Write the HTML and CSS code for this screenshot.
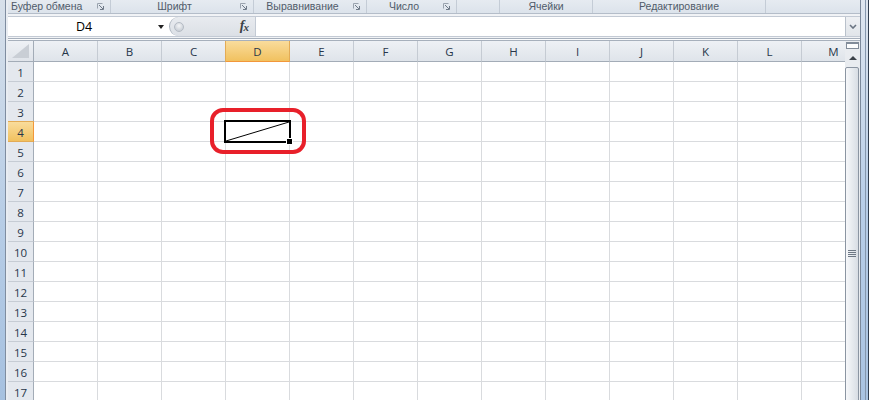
FILE: index.html
```html
<!DOCTYPE html>
<html lang="ru">
<head>
<meta charset="utf-8">
<title>Excel</title>
<link rel="stylesheet" href="styles.css">
</head>
<body>
<div class="window">
  <div class="frame-left"></div>
  <div class="main">
    <div class="ribbon">
      <div class="grp g1"><span class="lbl left">Буфер обмена</span><svg class="dl" viewBox="0 0 7 7" width="7" height="7"><path d="M0.5 5.5V0.5H5.5" fill="none" stroke="#9aa3ae"/><path d="M2 2L6 6M6.5 3V6.5H3" fill="none" stroke="#6f7a88"/></svg></div>
      <div class="grp g2"><span class="lbl">Шрифт</span><svg class="dl" viewBox="0 0 7 7" width="7" height="7"><path d="M0.5 5.5V0.5H5.5" fill="none" stroke="#9aa3ae"/><path d="M2 2L6 6M6.5 3V6.5H3" fill="none" stroke="#6f7a88"/></svg></div>
      <div class="grp g3"><span class="lbl">Выравнивание</span><svg class="dl" viewBox="0 0 7 7" width="7" height="7"><path d="M0.5 5.5V0.5H5.5" fill="none" stroke="#9aa3ae"/><path d="M2 2L6 6M6.5 3V6.5H3" fill="none" stroke="#6f7a88"/></svg></div>
      <div class="grp g4"><span class="lbl">Число</span><svg class="dl" viewBox="0 0 7 7" width="7" height="7"><path d="M0.5 5.5V0.5H5.5" fill="none" stroke="#9aa3ae"/><path d="M2 2L6 6M6.5 3V6.5H3" fill="none" stroke="#6f7a88"/></svg></div>
      <div class="grp g5"></div>
      <div class="grp g6"><span class="lbl">Ячейки</span></div>
      <div class="grp g7"><span class="lbl">Редактирование</span></div>
      <div class="grp g8"></div>
    </div>

    <div class="formula-area">
      <div class="fbar">
        <div class="namebox"><span class="name">D4</span><span class="nb-arrow"></span></div>
        <div class="fx-area"><span class="knob"></span><i class="fx">f<span>x</span></i></div>
        <div class="finput"></div>
        <div class="fexpand"><svg viewBox="0 0 8 5" width="8" height="5"><path d="M1 1L4 4L7 1" fill="none" stroke="#6a7482" stroke-width="1.6"/></svg></div>
      </div>
      <div class="fsep"></div>
    </div>

    <div class="sheet">
      <div class="grid-wrap">
        <div class="grid">
          <div class="corner"><svg viewBox="0 0 17 14" width="17" height="14"><path d="M17 0V14H0Z" fill="#c9ced5"/></svg></div>
          <div class="ch">A</div><div class="ch">B</div><div class="ch">C</div><div class="ch sel">D</div><div class="ch">E</div><div class="ch">F</div><div class="ch">G</div><div class="ch">H</div><div class="ch">I</div><div class="ch">J</div><div class="ch">K</div><div class="ch">L</div><div class="ch">M</div>

          <div class="rh">1</div><div class="c"></div><div class="c"></div><div class="c"></div><div class="c"></div><div class="c"></div><div class="c"></div><div class="c"></div><div class="c"></div><div class="c"></div><div class="c"></div><div class="c"></div><div class="c"></div><div class="c"></div>
          <div class="rh">2</div><div class="c"></div><div class="c"></div><div class="c"></div><div class="c"></div><div class="c"></div><div class="c"></div><div class="c"></div><div class="c"></div><div class="c"></div><div class="c"></div><div class="c"></div><div class="c"></div><div class="c"></div>
          <div class="rh">3</div><div class="c"></div><div class="c"></div><div class="c"></div><div class="c"></div><div class="c"></div><div class="c"></div><div class="c"></div><div class="c"></div><div class="c"></div><div class="c"></div><div class="c"></div><div class="c"></div><div class="c"></div>
          <div class="rh sel">4</div><div class="c"></div><div class="c"></div><div class="c"></div><div class="c"></div><div class="c"></div><div class="c"></div><div class="c"></div><div class="c"></div><div class="c"></div><div class="c"></div><div class="c"></div><div class="c"></div><div class="c"></div>
          <div class="rh">5</div><div class="c"></div><div class="c"></div><div class="c"></div><div class="c"></div><div class="c"></div><div class="c"></div><div class="c"></div><div class="c"></div><div class="c"></div><div class="c"></div><div class="c"></div><div class="c"></div><div class="c"></div>
          <div class="rh">6</div><div class="c"></div><div class="c"></div><div class="c"></div><div class="c"></div><div class="c"></div><div class="c"></div><div class="c"></div><div class="c"></div><div class="c"></div><div class="c"></div><div class="c"></div><div class="c"></div><div class="c"></div>
          <div class="rh">7</div><div class="c"></div><div class="c"></div><div class="c"></div><div class="c"></div><div class="c"></div><div class="c"></div><div class="c"></div><div class="c"></div><div class="c"></div><div class="c"></div><div class="c"></div><div class="c"></div><div class="c"></div>
          <div class="rh">8</div><div class="c"></div><div class="c"></div><div class="c"></div><div class="c"></div><div class="c"></div><div class="c"></div><div class="c"></div><div class="c"></div><div class="c"></div><div class="c"></div><div class="c"></div><div class="c"></div><div class="c"></div>
          <div class="rh">9</div><div class="c"></div><div class="c"></div><div class="c"></div><div class="c"></div><div class="c"></div><div class="c"></div><div class="c"></div><div class="c"></div><div class="c"></div><div class="c"></div><div class="c"></div><div class="c"></div><div class="c"></div>
          <div class="rh">10</div><div class="c"></div><div class="c"></div><div class="c"></div><div class="c"></div><div class="c"></div><div class="c"></div><div class="c"></div><div class="c"></div><div class="c"></div><div class="c"></div><div class="c"></div><div class="c"></div><div class="c"></div>
          <div class="rh">11</div><div class="c"></div><div class="c"></div><div class="c"></div><div class="c"></div><div class="c"></div><div class="c"></div><div class="c"></div><div class="c"></div><div class="c"></div><div class="c"></div><div class="c"></div><div class="c"></div><div class="c"></div>
          <div class="rh">12</div><div class="c"></div><div class="c"></div><div class="c"></div><div class="c"></div><div class="c"></div><div class="c"></div><div class="c"></div><div class="c"></div><div class="c"></div><div class="c"></div><div class="c"></div><div class="c"></div><div class="c"></div>
          <div class="rh">13</div><div class="c"></div><div class="c"></div><div class="c"></div><div class="c"></div><div class="c"></div><div class="c"></div><div class="c"></div><div class="c"></div><div class="c"></div><div class="c"></div><div class="c"></div><div class="c"></div><div class="c"></div>
          <div class="rh">14</div><div class="c"></div><div class="c"></div><div class="c"></div><div class="c"></div><div class="c"></div><div class="c"></div><div class="c"></div><div class="c"></div><div class="c"></div><div class="c"></div><div class="c"></div><div class="c"></div><div class="c"></div>
          <div class="rh">15</div><div class="c"></div><div class="c"></div><div class="c"></div><div class="c"></div><div class="c"></div><div class="c"></div><div class="c"></div><div class="c"></div><div class="c"></div><div class="c"></div><div class="c"></div><div class="c"></div><div class="c"></div>
          <div class="rh">16</div><div class="c"></div><div class="c"></div><div class="c"></div><div class="c"></div><div class="c"></div><div class="c"></div><div class="c"></div><div class="c"></div><div class="c"></div><div class="c"></div><div class="c"></div><div class="c"></div><div class="c"></div>
          <div class="rh">17</div><div class="c"></div><div class="c"></div><div class="c"></div><div class="c"></div><div class="c"></div><div class="c"></div><div class="c"></div><div class="c"></div><div class="c"></div><div class="c"></div><div class="c"></div><div class="c"></div><div class="c"></div>
        </div>
      </div>
      <div class="vscroll">
        <div class="split"></div>
        <div class="up"><span class="tri"></span></div>
        <div class="thumb"><span class="grip"></span></div>
      </div>
    </div>
  </div>
  <div class="frame-right"></div>

  <div class="active-cell"><svg viewBox="0 0 63 19" width="63" height="19" preserveAspectRatio="none"><line x1="0" y1="19" x2="63" y2="0" stroke="#000" stroke-width="1"/></svg></div>
  <div class="fill-handle"></div>
  <div class="annot"></div>
</div>
</body>
</html>
```

FILE: styles.css
```css
html, body {
  margin: 0;
  padding: 0;
}
body {
  width: 869px;
  height: 400px;
  overflow: hidden;
  background: #ffffff;
  font-family: "Open Sans", "Noto Sans", sans-serif;
}
.window {
  position: relative;
  display: flex;
  width: 869px;
  height: 400px;
  overflow: hidden;
}
.frame-left {
  flex: none;
  width: 8px;
  height: 400px;
  background:
    linear-gradient(to right, transparent 0 5px, #7f8da0 5px 6px, #e9edf2 6px 8px),
    linear-gradient(#d7e0ea, #b7cde6 55%, #a6c1e0);
}
.frame-right {
  flex: none;
  width: 9px;
  height: 400px;
  background:
    linear-gradient(to right, #7b899b 0 1px, transparent 1px 5px, #8597ad 5px 6px, transparent 6px 8px, #2f3d4f 8px 9px),
    linear-gradient(#dde5ef, #b8cee8 50%, #a9c3e1);
}
.main {
  flex: none;
  width: 852px;
  display: flex;
  flex-direction: column;
}

/* Ribbon group labels */
.ribbon {
  flex: none;
  display: flex;
  height: 13px;
  border-bottom: 1px solid #b4bdc9;
  background: linear-gradient(#e6ebf1, #dce3eb);
  font-family: "Liberation Sans", Arial, sans-serif;
  font-size: 10.5px;
  line-height: 12px;
  color: #505b6a;
}
.grp {
  flex: none;
  display: flex;
  align-items: flex-start;
  box-sizing: border-box;
  height: 13px;
  border-right: 1px solid #c4ccd6;
  white-space: nowrap;
}
.grp .lbl {
  flex: 1;
  text-align: center;
  line-height: 12px;
}
.grp .lbl.left {
  text-align: left;
  padding-left: 3px;
}
.grp .dl {
  flex: none;
  margin: 3px 6px 0 2px;
}
.g1 { width: 103px; }
.g2 { width: 143px; }
.g3 { width: 113px; }
.g4 { width: 90px; }
.g5 { width: 43px; }
.g6 { width: 93px; }
.g7 { width: 173px; }
.g8 { width: 94px; border-right: none; }

/* Formula bar */
.formula-area {
  flex: none;
  height: 27px;
  box-sizing: border-box;
  padding-top: 2px;
  background: #f1f3f6;
}
.fbar {
  display: flex;
  height: 21px;
  box-sizing: border-box;
  border-top: 1px solid #c3cad4;
  border-bottom: 1px solid #c3cad4;
  background: #ffffff;
}
.namebox {
  flex: none;
  width: 160px;
  display: flex;
  align-items: center;
  background: #ffffff;
}
.name {
  flex: 1;
  text-align: center;
  font-size: 12.5px;
  color: #000;
  padding-left: 2px;
}
.nb-arrow {
  flex: none;
  width: 0;
  height: 0;
  margin-right: 4px;
  margin-top: 1px;
  border-top: 4px solid #222;
  border-left: 3.5px solid transparent;
  border-right: 3.5px solid transparent;
}
.fx-area {
  flex: none;
  width: 87px;
  box-sizing: border-box;
  display: flex;
  align-items: center;
  justify-content: space-between;
  padding: 0 7px 0 4px;
  margin-left: 1px;
  background: linear-gradient(#e8ebef, #dce0e6);
  border-left: 1px solid #aab2bd;
  border-right: 1px solid #c3cad4;
  border-radius: 10px 0 0 10px;
}
.knob {
  width: 10px;
  height: 10px;
  border-radius: 50%;
  box-sizing: border-box;
  border: 1px solid #b4bbc4;
  background: radial-gradient(circle at 50% 35%, #f4f5f7, #cdd2d9 70%);
}
.fx {
  font-family: "Liberation Serif", "DejaVu Serif", serif;
  font-size: 14px;
  font-weight: bold;
  color: #3b3f45;
  letter-spacing: -1px;
  margin-top: -2px;
}
.fx span {
  font-size: 11px;
  position: relative;
  top: 1px;
}
.finput {
  flex: 1;
  background: #ffffff;
}
.fexpand {
  flex: none;
  width: 15px;
  box-sizing: border-box;
  display: flex;
  align-items: center;
  justify-content: center;
  background: linear-gradient(#eef0f3, #e1e5ea);
  border-left: 1px solid #b9c1cb;
}
.fsep {
  height: 1px;
  margin-top: 1px;
  border-top: 1px solid #a7b0bc;
  border-bottom: 1px solid #a7b0bc;
  background: #fbfcfd;
}

/* Sheet */
.sheet {
  flex: 1;
  display: flex;
  min-height: 0;
}
.grid-wrap {
  flex: none;
  width: 837px;
  overflow: hidden;
}
.grid {
  display: grid;
  grid-template-columns: 26px repeat(13, 64px);
  grid-template-rows: 21px;
  grid-auto-rows: 20px;
  width: 858px;
}
.grid > div {
  box-sizing: border-box;
}
.c {
  border-right: 1px solid #d9dbde;
  border-bottom: 1px solid #d9dbde;
}
.corner {
  display: flex;
  align-items: flex-end;
  justify-content: flex-end;
  padding: 0 4px 3px 0;
  background: linear-gradient(#eef1f5, #e0e4ea);
  border-right: 1px solid #a3acb7;
  border-bottom: 1px solid #a3acb7;
}
.ch {
  background: linear-gradient(#eef1f5, #dfe4ea);
  border-right: 1px solid #c5cbd3;
  border-bottom: 1px solid #a3acb7;
  text-align: center;
  font-size: 11.5px;
  line-height: 22px;
  color: #27364a;
  overflow: hidden;
}
.ch.sel {
  background: linear-gradient(#f9dc9c, #f1c15f);
  border-right-color: #e3ab55;
  border-bottom-color: #f2973a;
  box-shadow: -1px 0 0 #e3ab55;
}
.rh {
  background: #e4e8ee;
  border-right: 1px solid #a3acb7;
  border-bottom: 1px solid #c6ccd4;
  text-align: center;
  font-size: 11.5px;
  line-height: 21px;
  color: #27364a;
  overflow: hidden;
}
.rh.sel {
  background: linear-gradient(#f9dc9c, #f1c15f);
  border-right-color: #f2973a;
  border-bottom-color: #e3ab55;
  box-shadow: 0 -1px 0 #e3ab55;
}

/* Vertical scrollbar */
.vscroll {
  flex: none;
  width: 15px;
  display: flex;
  flex-direction: column;
  background: #e9ecf0;
  overflow: hidden;
}
.split {
  flex: none;
  height: 7px;
  margin: 1px 1px 0 1px;
  box-sizing: border-box;
  border: 1px solid #808b99;
  border-top-width: 2px;
  background: #fbfcfd;
}
.up {
  flex: none;
  height: 18px;
  display: flex;
  align-items: center;
  justify-content: center;
}
.tri {
  width: 0;
  height: 0;
  border-bottom: 4px solid #3c424a;
  border-left: 4px solid transparent;
  border-right: 4px solid transparent;
}
.thumb {
  flex: none;
  height: 400px;
  margin: 0 1px 0 0;
  box-sizing: border-box;
  border: 1px solid #8b95a2;
  border-radius: 2px 2px 0 0;
  background: linear-gradient(to right, #f7f8fa, #e4e8ed 60%, #d8dde4);
  display: flex;
  justify-content: center;
}
.grip {
  width: 8px;
  height: 7px;
  margin-top: 182px;
  background: repeating-linear-gradient(#6e7885 0 1px, transparent 1px 2px);
}

/* Overlays */
.active-cell {
  position: absolute;
  left: 224px;
  top: 120px;
  width: 67px;
  height: 23px;
  box-sizing: border-box;
  border: 2px solid #000;
}
.active-cell svg {
  display: block;
  width: 63px;
  height: 19px;
}
.fill-handle {
  position: absolute;
  left: 286px;
  top: 138px;
  width: 5px;
  height: 5px;
  background: #000;
  border: 1px solid #fff;
}
.annot {
  position: absolute;
  left: 210px;
  top: 108px;
  width: 96px;
  height: 46px;
  box-sizing: border-box;
  border: 4px solid #e8202a;
  border-radius: 13px;
}
```
